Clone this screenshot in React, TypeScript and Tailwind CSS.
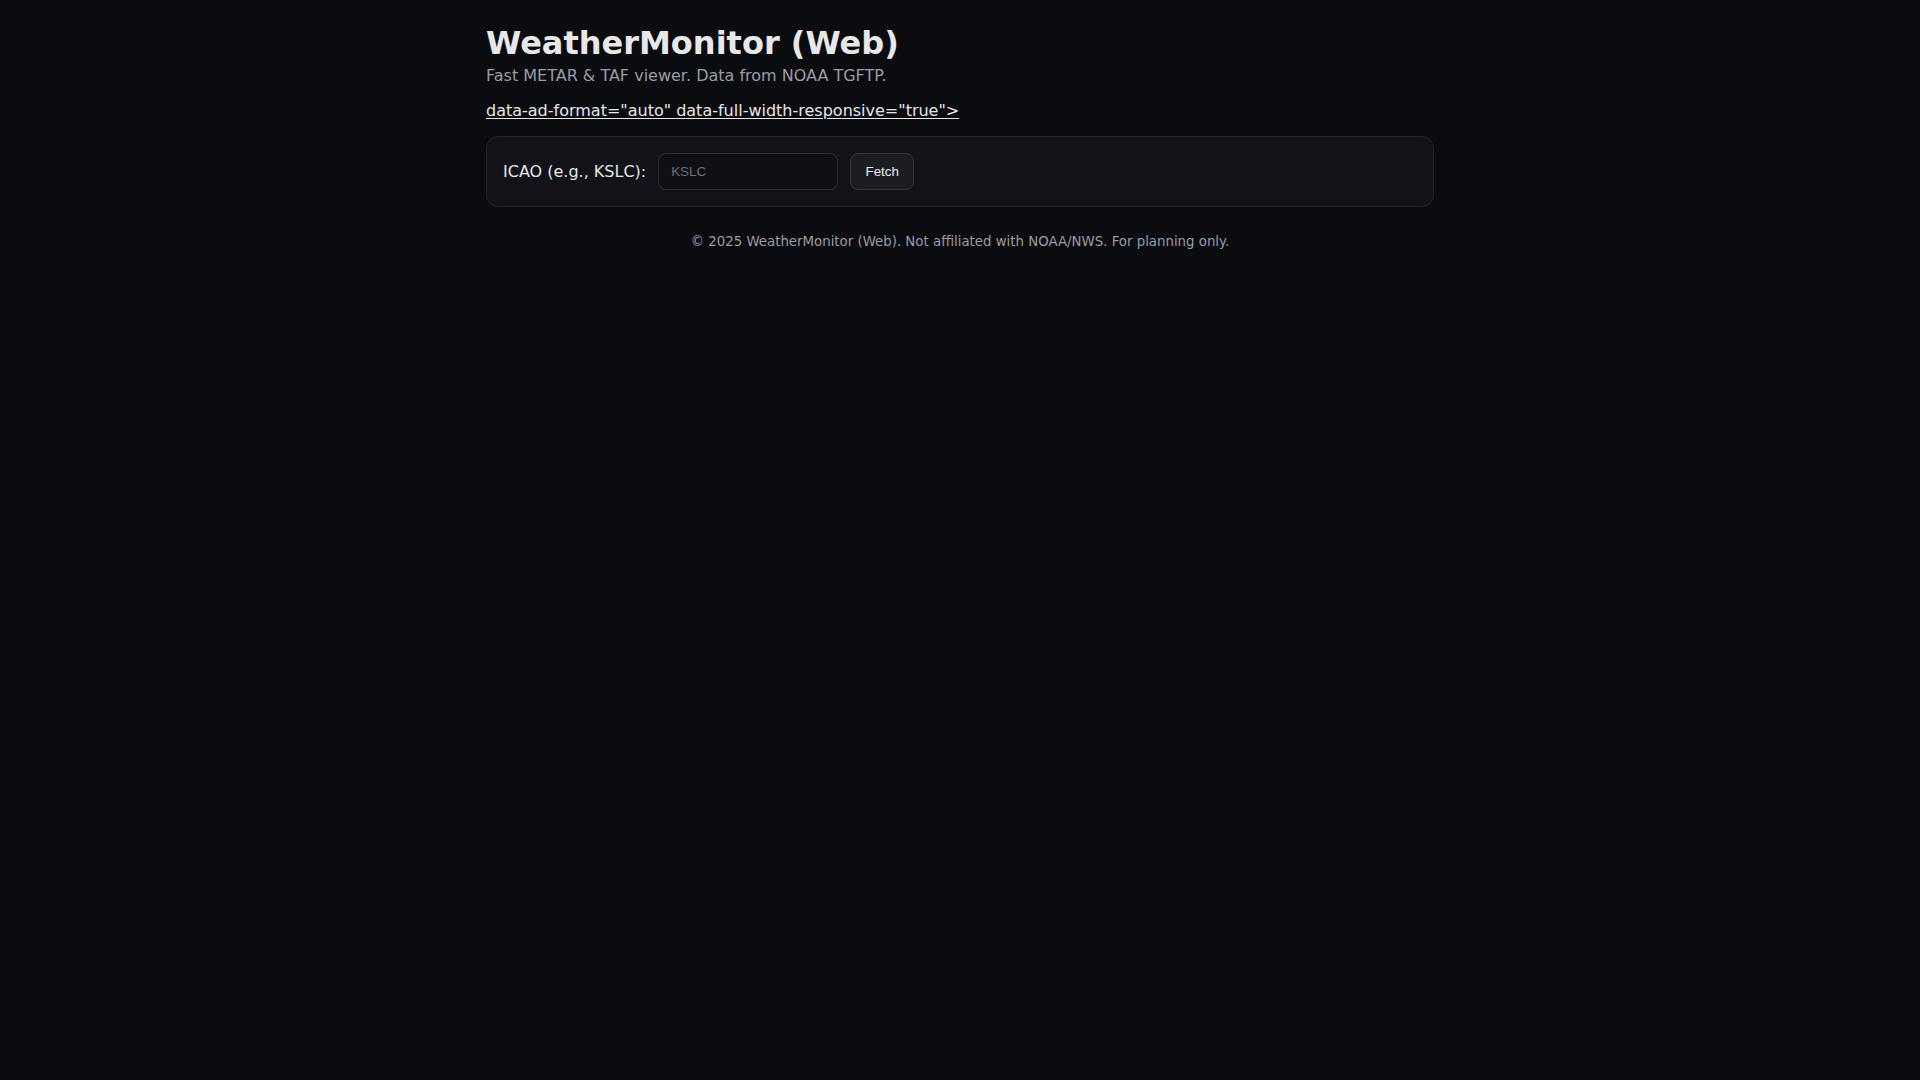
// WeatherMonitor (Web) — METAR & TAF lookup page

import { useState } from 'react';

export default function App() {
  const [icao, setIcao] = useState('');

  return (
    <div className="min-h-screen bg-[#0b0c10] text-[#e6e6e6] font-['DejaVu_Sans',sans-serif]">
      <div className="mx-auto max-w-[980px] px-4 pt-6 pb-8">
        {/* Header */}
        <h1 className="m-0 text-[32px] font-bold leading-[1.2] text-[#e8e8e8]">WeatherMonitor (Web)</h1>
        <p className="mt-[2px] text-base leading-6 text-[#9a9ca3]">Fast METAR &amp; TAF viewer. Data from NOAA TGFTP.</p>
        <a href="#" className="mt-[11px] block w-fit text-base leading-6 text-[#e6e6e6] underline underline-offset-2">
          data-ad-format="auto" data-full-width-responsive="true"&gt;
        </a>

        {/* Lookup card */}
        <div className="mt-[13px] flex items-center gap-3 rounded-xl border border-[#22252d] bg-[#121319] px-4 py-[16px]">
          <label htmlFor="icao" className="text-base leading-6 text-[#e6e6e6]">ICAO (e.g., KSLC):</label>
          <input
            id="icao"
            value={icao}
            onChange={(e) => setIcao(e.target.value)}
            placeholder="KSLC"
            className="h-[36.5px] w-[180px] rounded-lg border border-[#2b2e36] bg-[#0f1015] px-3 font-['Liberation_Sans',Arial,sans-serif] text-[13.33px] text-[#e6e6e6] placeholder:text-[#6c6f77] outline-none"
          />
          <button className="h-[36.5px] w-16 rounded-lg border border-[#34373f] bg-[#1c1d23] font-['Liberation_Sans',Arial,sans-serif] text-[13.33px] text-[#ececec]">
            Fetch
          </button>
        </div>

        {/* Footer */}
        <p className="mt-[25px] text-center text-[13.33px] leading-5 text-[#9a9ca3]">
          © 2025 WeatherMonitor (Web). Not affiliated with NOAA/NWS. For planning only.
        </p>
      </div>
    </div>
  );
}
